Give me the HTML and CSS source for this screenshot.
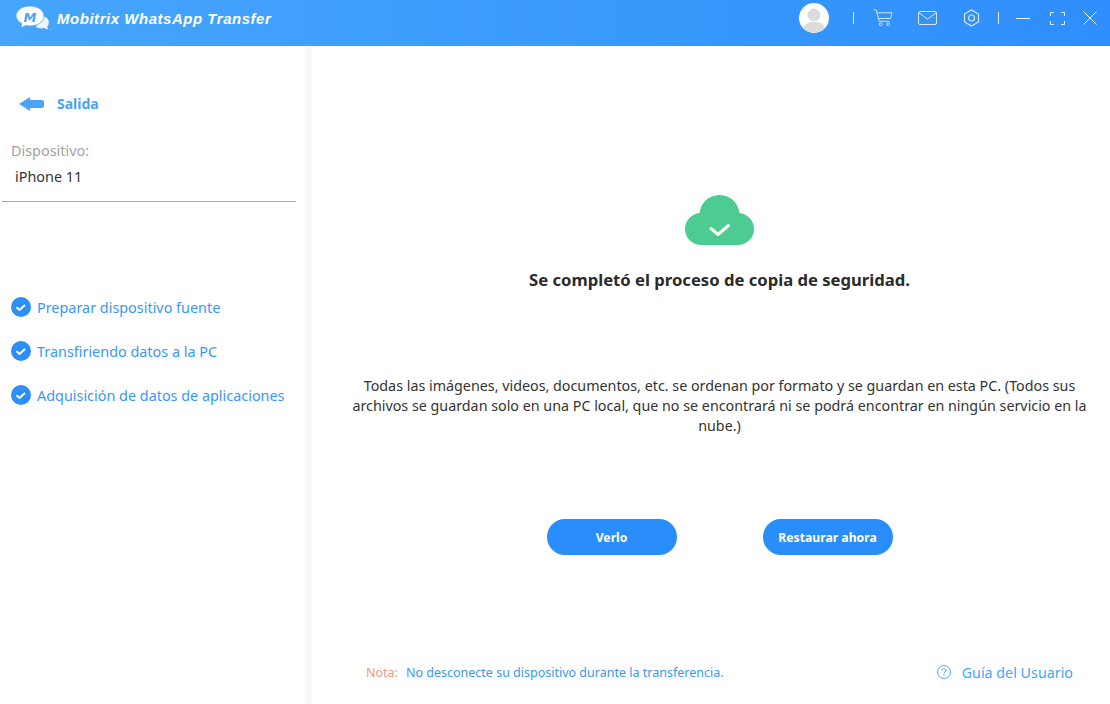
FILE: index.html
```html
<!DOCTYPE html>
<html lang="es">
<head>
  <meta charset="UTF-8" />
  <title>Mobitrix WhatsApp Transfer</title>
  <link rel="stylesheet" href="styles.css">
</head>
<body>
  <div class="app">
    <header class="topbar">
      <div class="brand">
        <svg class="brand-logo" width="33" height="24" viewBox="0 0 33 24">
          <path d="M22 11c5-2 9 0 10.300 3 1 2.500 .5 5-1 6.500l.7 3-4-1.500c-3 .8-6 .3-8-1z" fill="#fff" opacity=".9"/>
          <path d="M14 0c7.500 0 14 4 14 10s-6.500 10-14 10c-1.500 0-3-.2-4.300-.5L5 22l.8-4.500C2.300 15.600 0 13 0 10 0 4 6.500 0 14 0z" fill="#fff" stroke="#46a6fb" stroke-width=".8"/>
          <text x="14" y="15.500" class="brand-m">M</text>
        </svg>
        <span class="brand-name">Mobitrix WhatsApp Transfer</span>
      </div>
      <div class="tools">
        <svg class="avatar" width="30" height="30" viewBox="0 0 30 30">
          <circle cx="15" cy="15" r="15" fill="#fff"/>
          <circle cx="15" cy="12" r="6.500" fill="#dcdcdc"/>
          <path d="M4 25c2-5 6-6 11-6s9 1 11 6a15 15 0 0 1-22 0z" fill="#dcdcdc"/>
        </svg>
        <span class="sep sep-first"></span>
        <svg class="tool-cart" width="20" height="18" viewBox="0 0 21 18" fill="none" stroke="#d5e9ff" stroke-width="1">
          <path d="M.5 .5h3l3 12h11"/>
          <path d="M4.500 3.500h15.500l-1.500 6H6"/>
          <circle cx="8" cy="15.500" r="1.500"/>
          <circle cx="16" cy="15.500" r="1.500"/>
        </svg>
        <svg class="tool-mail" width="19" height="14" viewBox="0 0 19 14" fill="none" stroke="#d5e9ff" stroke-width="1">
          <rect x=".5" y=".5" width="18" height="13" rx="1.500"/>
          <path d="M1 2l8.500 6L18 2"/>
        </svg>
        <svg class="tool-gear" width="17" height="18" viewBox="0 0 17 18" fill="none" stroke="#d5e9ff" stroke-width="1.200">
          <path d="M8.500 1l7 4v8l-7 4-7-4V5z"/>
          <circle cx="8.500" cy="9" r="3"/>
        </svg>
        <span class="sep sep-second"></span>
        <span class="tool-min"></span>
        <svg class="tool-max" width="15" height="13" viewBox="0 0 15 13" fill="none" stroke="#e6f2ff" stroke-width="1">
          <path d="M.5 4V.5H4M11 .5h3.500V4M.5 9v3.500H4M11 12.500h3.500V9"/>
        </svg>
        <svg class="tool-close" width="14" height="14" viewBox="0 0 14 14" fill="none" stroke="#e6f2ff" stroke-width="1">
          <path d="M.5 .5l13 13M13.500 .5l-13 13"/>
        </svg>
      </div>
    </header>

    <div class="content">
      <aside class="sidebar">
        <div class="back">
          <svg width="25" height="14" viewBox="0 0 25 14">
            <path d="M0 7l11-7v3h12a2 2 0 0 1 2 2v4a2 2 0 0 1-2 2H11v3z" fill="#4ba3f8"/>
          </svg>
          <span>Salida</span>
        </div>
        <div class="device">
          <div class="device-label">Dispositivo:</div>
          <div class="device-name">iPhone 11</div>
        </div>
        <ul class="steps">
          <li>
            <svg width="20" height="20" viewBox="0 0 20 20"><circle cx="10" cy="10" r="10" fill="#2b8ff5"/><path d="M5.500 10.200l3 2.800 5.500-5" fill="none" stroke="#fff" stroke-width="2"/></svg>
            Preparar dispositivo fuente
          </li>
          <li>
            <svg width="20" height="20" viewBox="0 0 20 20"><circle cx="10" cy="10" r="10" fill="#2b8ff5"/><path d="M5.500 10.200l3 2.800 5.500-5" fill="none" stroke="#fff" stroke-width="2"/></svg>
            Transfiriendo datos a la PC
          </li>
          <li>
            <svg width="20" height="20" viewBox="0 0 20 20"><circle cx="10" cy="10" r="10" fill="#2b8ff5"/><path d="M5.500 10.200l3 2.800 5.500-5" fill="none" stroke="#fff" stroke-width="2"/></svg>
            Adquisición de datos de aplicaciones
          </li>
        </ul>
      </aside>

      <main class="main">
        <svg class="cloud" width="69" height="51" viewBox="0 0 69 51">
          <circle cx="34.500" cy="20" r="20" fill="#4ccb92"/>
          <circle cx="16" cy="34" r="16" fill="#4ccb92"/>
          <circle cx="53" cy="34" r="16" fill="#4ccb92"/>
          <rect x="16" y="25" width="37" height="25" fill="#4ccb92"/>
          <path d="M26 33.500l7 6 10.500-9" fill="none" stroke="#fff" stroke-width="3" stroke-linecap="round" stroke-linejoin="round"/>
        </svg>
        <h1>Se completó el proceso de copia de seguridad.</h1>
        <p class="info">Todas las imágenes, videos, documentos, etc. se ordenan por formato y se guardan en esta PC. (Todos sus archivos se guardan solo en una PC local, que no se encontrará ni se podrá encontrar en ningún servicio en la nube.)</p>
        <div class="actions">
          <button>Verlo</button>
          <button>Restaurar ahora</button>
        </div>
        <footer class="foot">
          <div class="note"><span class="note-tag">Nota:</span>No desconecte su dispositivo durante la transferencia.</div>
          <div class="guide">
            <svg width="14" height="14" viewBox="0 0 14 14" fill="none" stroke="#4ba3f8">
              <circle cx="7" cy="7" r="6.500"/>
              <path d="M5 5.500c0-1.300 1-2 2-2s2 .7 2 1.900c0 1.500-2 1.500-2 3.100"/>
              <path d="M7 9.500v1.200"/>
            </svg>
            <span>Guía del Usuario</span>
          </div>
        </footer>
      </main>
    </div>
  </div>
</body>
</html>
```

FILE: styles.css
```css
* {
  margin: 0;
  padding: 0;
  box-sizing: border-box;
}
body {
  background: #fff;
  font-family: "Noto Sans", "Open Sans", sans-serif;
  color: #333;
  overflow: hidden;
}
.app {
  width: 1110px;
  height: 704px;
  display: flex;
  flex-direction: column;
}

/* top bar */
.topbar {
  height: 46px;
  flex: none;
  display: flex;
  align-items: center;
  justify-content: space-between;
  padding-bottom: 10px;
  background: linear-gradient(90deg, #46a6fb, #2f8efb);
}
.brand {
  display: flex;
  align-items: center;
  padding-left: 16px;
}
.brand-logo {
  margin-right: 8px;
}
.brand-m {
  font: italic bold 13px "DejaVu Sans", sans-serif;
  fill: #46a6fb;
  text-anchor: middle;
}
.brand-name {
  font: italic bold 15px "Liberation Sans", sans-serif;
  letter-spacing: 0.53px;
  color: #fff;
}
.tools {
  display: flex;
  align-items: center;
  padding-right: 13px;
}
.avatar { margin-right: 24px; }
.sep {
  width: 1px;
  height: 12px;
  background: #d5e9ff;
}
.sep-first { margin-right: 19px; }
.tool-cart { margin-right: 25px; }
.tool-mail { margin-right: 26px; }
.tool-gear { margin-right: 18px; }
.sep-second { margin-right: 17px; }
.tool-min {
  width: 14px;
  height: 1px;
  background: #e6f2ff;
  margin-right: 20px;
}
.tool-max { margin-right: 18px; }

.content {
  flex: 1;
  display: flex;
  min-height: 0;
}

/* sidebar */
.sidebar {
  width: 312px;
  flex: none;
  border-right: 7px solid #f9f9f9;
}
.back {
  display: flex;
  align-items: center;
  gap: 13px;
  padding: 48px 0 0 19px;
  font-size: 14px;
  font-weight: 700;
  line-height: 20px;
  color: #4ba3f8;
}
.device {
  margin: 27px 9px 0 2px;
  padding-bottom: 14px;
  border-bottom: 1px solid #aaa;
}
.device-label {
  padding-left: 9px;
  font-size: 14.400px;
  line-height: 20px;
  color: #a3a3a3;
}
.device-name {
  padding: 6px 0 0 13px;
  font-size: 14.400px;
  line-height: 20px;
  color: #333;
}
.steps {
  list-style: none;
  margin-top: 83px;
  padding-left: 11px;
}
.steps li {
  display: flex;
  align-items: center;
  gap: 6px;
  height: 44px;
  font-size: 14.400px;
  color: #3a97f5;
  white-space: nowrap;
}

/* main panel */
.main {
  flex: 1;
  display: flex;
  flex-direction: column;
  align-items: center;
  padding: 149px 0 0 17px;
}
.cloud { flex: none; }
h1 {
  margin-top: 23px;
  font-size: 16.650px;
  font-weight: 700;
  line-height: 22px;
  color: #2b2b2b;
}
.info {
  width: 748px;
  margin-top: 85px;
  font-size: 14.300px;
  line-height: 20px;
  text-align: center;
  color: #333;
}
.actions {
  display: flex;
  gap: 86px;
  margin-top: 83px;
}
.actions button {
  width: 130px;
  height: 36px;
  border: none;
  border-radius: 18px;
  background: #2a8dfc;
  color: #fff;
  font: 700 12.200px "Noto Sans", sans-serif;
}
.foot {
  width: 100%;
  display: flex;
  align-items: center;
  justify-content: space-between;
  margin-top: 106px;
  padding: 0 37px;
}
.note {
  padding-top: 2px;
  font-size: 12.500px;
  line-height: 20px;
  color: #3a97f5;
}
.note-tag {
  margin-right: 8px;
  color: #ea9a80;
}
.guide {
  display: flex;
  align-items: center;
  gap: 11px;
  font-size: 14.300px;
  color: #4ba3f8;
}
```
